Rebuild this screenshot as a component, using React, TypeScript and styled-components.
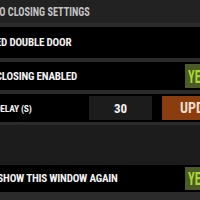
import React from "react";
import styled, { createGlobalStyle } from "styled-components";

const Global = createGlobalStyle`
  html, body {
    margin: 0;
    padding: 0;
    background: #1c1c1c;
    overflow: hidden;
  }
  * { box-sizing: border-box; }
`;

const Panel = styled.div`
  width: 293px;
  margin-left: -39px;
  font-family: "Roboto Condensed", "Liberation Sans Narrow", Roboto, sans-serif;
  font-weight: 700;
  text-transform: uppercase;
`;

const Header = styled.header`
  height: 23px;
  background: #222222;
  color: #c2c2c2;
  font-size: 12.5px;
  display: flex;
  align-items: center;
  padding-left: 21px;
  white-space: nowrap;
`;

const Section = styled.div<{ $top: number; $bottom: number }>`
  background: #2b2b2b;
  padding: ${(p) => `${p.$top}px 0 ${p.$bottom}px`};
  display: flex;
  flex-direction: column;
  gap: 4px;
`;

const Row = styled.div<{ $h: number }>`
  height: ${(p) => p.$h}px;
  background: #000;
  display: flex;
  align-items: center;
  padding: 2px 0 2px 8px;
  gap: 10px;
`;

const Label = styled.div<{ $small?: boolean; $shift?: number }>`
  color: #f2f2f2;
  font-size: ${(p) => (p.$small ? "9.5px" : "11px")};
  letter-spacing: -0.2px;
  margin-left: ${(p) => p.$shift ?? 0}px;
  margin-right: auto;
  white-space: nowrap;
`;

const Spacer = styled.div`
  height: 40px;
  background: #1c1c1c;
`;

const YesButton = styled.button`
  width: 69px;
  height: 100%;
  border: none;
  background: #4b5a27;
  color: #a9d72e;
  font: inherit;
  font-size: 18px;
  text-transform: uppercase;
  padding: 0 0 0 3px;
  text-align: left;
  overflow: hidden;
`;

const Narrow = styled.span<{ $scale: number }>`
  display: inline-block;
  transform: scaleX(${(p) => p.$scale});
  transform-origin: left center;
`;

const NumberBox = styled.div`
  width: 63px;
  height: 100%;
  background: #1c1c1c;
  color: #f2f2f2;
  font-size: 13px;
  display: flex;
  align-items: center;
  justify-content: center;
`;

const UpdateButton = styled.button`
  width: 92px;
  height: 100%;
  border: none;
  background: #8b3d10;
  color: #f3ddc8;
  font: inherit;
  font-size: 14px;
  text-transform: uppercase;
  padding: 0 0 0 18px;
  text-align: left;
`;

export default function App() {
  return (
    <>
      <Global />
      <Panel>
        <Header>
          <Narrow $scale={0.82}>Auto Closing Settings</Narrow>
        </Header>
        <Section $top={4} $bottom={3}>
          <Row $h={31}>
            <Label $shift={-6}>Selected Double Door</Label>
          </Row>
          <Row $h={28}>
            <Label>Auto Closing Enabled</Label>
            <YesButton>
              <Narrow $scale={0.68}>Yes</Narrow>
            </YesButton>
          </Row>
          <Row $h={28}>
            <Label $small>Close Delay (s)</Label>
            <NumberBox>30</NumberBox>
            <UpdateButton>Update</UpdateButton>
          </Row>
        </Section>
        <Spacer />
        <Section $top={0} $bottom={8}>
          <Row $h={27}>
            <Label>Don't Show This Window Again</Label>
            <YesButton>
              <Narrow $scale={0.68}>Yes</Narrow>
            </YesButton>
          </Row>
        </Section>
      </Panel>
    </>
  );
}
